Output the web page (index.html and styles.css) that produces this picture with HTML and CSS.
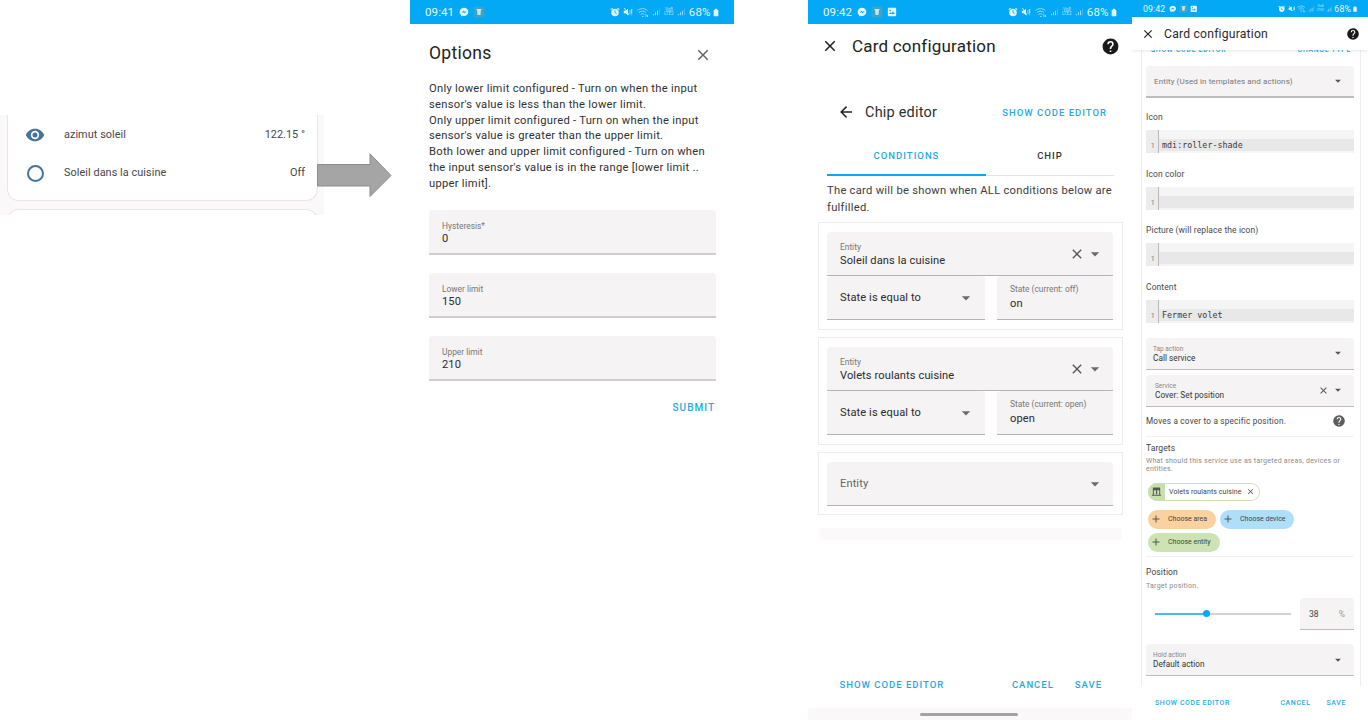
FILE: index.html
```html
<!DOCTYPE html>
<html lang="en">
<head>
<meta charset="utf-8">
<title>Card configuration</title>
<link rel="stylesheet" href="styles.css">
</head>
<body>
<svg class="sprite" width="0" height="0" aria-hidden="true">
  <symbol id="i-close" viewBox="0 0 24 24"><path d="M19,6.41L17.59,5L12,10.59L6.41,5L5,6.41L10.59,12L5,17.59L6.41,19L12,13.41L17.59,19L19,17.59L13.41,12L19,6.41Z"/></symbol>
  <symbol id="i-back" viewBox="0 0 24 24"><path d="M20,11V13H8L13.5,18.5L12.08,19.92L4.16,12L12.08,4.08L13.5,5.5L8,11H20Z"/></symbol>
  <symbol id="i-help" viewBox="0 0 24 24"><path d="M15.07,11.25L14.17,12.17C13.45,12.89 13,13.5 13,15H11V14.5C11,13.39 11.45,12.39 12.17,11.67L13.41,10.41C13.78,10.05 14,9.55 14,9C14,7.89 13.1,7 12,7A2,2 0 0,0 10,9H8A4,4 0 0,1 12,5A4,4 0 0,1 16,9C16,9.88 15.64,10.67 15.07,11.25M13,19H11V17H13M12,2A10,10 0 0,0 2,12A10,10 0 0,0 12,22A10,10 0 0,0 22,12C22,6.47 17.5,2 12,2Z"/></symbol>
  <symbol id="i-eye" viewBox="0 0 24 24"><path d="M12,9A3,3 0 0,0 9,12A3,3 0 0,0 12,15A3,3 0 0,0 15,12A3,3 0 0,0 12,9M12,17A5,5 0 0,1 7,12A5,5 0 0,1 12,7A5,5 0 0,1 17,12A5,5 0 0,1 12,17M12,4.5C7,4.5 2.73,7.61 1,12C2.73,16.39 7,19.5 12,19.5C17,19.5 21.27,16.39 23,12C21.27,7.61 17,4.5 12,4.5Z"/></symbol>
  <symbol id="i-down" viewBox="0 0 24 24"><path d="M7,10L12,15L17,10H7Z"/></symbol>
  <symbol id="i-plus" viewBox="0 0 24 24"><path d="M19,13H13V19H11V13H5V11H11V5H13V11H19V13Z"/></symbol>
  <symbol id="i-shade" viewBox="0 0 24 24"><path d="M20 19V3H4V19H2V21H22V19H20M6 19V9H11V14.8C10.6 15.1 10.3 15.5 10.3 16C10.3 17 11.1 17.8 12.1 17.8S13.9 17 13.9 16C13.9 15.5 13.7 15 13.3 14.8V9H18V19H6Z"/></symbol>
  <symbol id="s-msg" viewBox="0 0 24 24"><path fill-rule="evenodd" d="M12 2C6 2 1.5 6.300 1.500 11.800c0 3 1.300 5.500 3.500 7.300V23l3.500-2c1.100.3 2.300.5 3.500.5 6 0 10.500-4.300 10.500-9.700S18 2 12 2zM6 15l4.500-6 3 2.500L18 9l-4.500 6-3-2.500z"/></symbol>
  <symbol id="s-app" viewBox="0 0 24 24"><rect x="1" y="1" width="22" height="22" rx="3" fill="#3aa5c9"/><path d="M8 7h8l-1 11H9z" fill="#bfe6f2"/><rect x="7" y="6" width="10" height="1.500" fill="#e4f5fa"/></symbol>
  <symbol id="s-pic" viewBox="0 0 24 24"><path fill-rule="evenodd" d="M4 2h16a2 2 0 0 1 2 2v16a2 2 0 0 1-2 2H4a2 2 0 0 1-2-2V4a2 2 0 0 1 2-2zm1 15h14l-4.500-6-3.500 4.500-2.500-3zM7.500 6a2 2 0 1 0 0 4 2 2 0 0 0 0-4z"/></symbol>
  <symbol id="s-alarm" viewBox="0 0 24 24"><path fill-rule="evenodd" d="M12 4a9 9 0 1 0 0 18 9 9 0 0 0 0-18zm-1 4h2v5l3.500 2-1 1.600L11 14zM1 5.500 5.500 2l1.500 1.800L2.500 7.300zM23 5.500 18.500 2 17 3.800l4.500 3.500z"/></symbol>
  <symbol id="s-mute" viewBox="0 0 24 24"><path d="M2 9v6h4l6 5V4L6 9zM2.500 3 14 20l1.500-1L4 2zM16 7l1.500-1v12L16 17zM20 5h2v11h-2zM20 18h2v2h-2z"/></symbol>
  <symbol id="s-wifi" viewBox="0 0 24 24"><path fill="none" stroke="currentColor" stroke-width="2" d="M1 9c6-5 14-5 20 0M4 13c4-3.500 10-3.500 14 0M7 17c2.500-2 5.500-2 8 0"/><path d="M10 20h3v2h-3zM17 16h2v6h-2zM20 18h2v4h-2z"/></symbol>
  <symbol id="s-bars" viewBox="0 0 24 24"><path d="M3 18h3v4H3zM9 13h3v9H9zM15 8h3v14h-3z"/><path d="M21 2h2v20h-2z" opacity=".6"/></symbol>
  <symbol id="s-batt" viewBox="0 0 24 24"><path d="M9 1h6v3h3a1 1 0 0 1 1 1v17a1 1 0 0 1-1 1H6a1 1 0 0 1-1-1V5a1 1 0 0 1 1-1h3z"/></symbol>
</svg>

<main class="canvas">

  <section class="panel panel-entities">
    <div class="entity-card">
      <div class="entity-row">
        <svg class="entity-icon"><use href="#i-eye"/></svg>
        <span class="entity-name">azimut soleil</span>
        <span class="entity-value">122.15 °</span>
      </div>
      <div class="entity-row">
        <span class="entity-ring"></span>
        <span class="entity-name">Soleil dans la cuisine</span>
        <span class="entity-value">Off</span>
      </div>
    </div>
    <div class="entity-next"></div>
  </section>

  <svg class="big-arrow" viewBox="0 0 75 45"><path d="M0.500 11.500H53V0.800L74 22.500L53 43.500V33H0.500Z"/></svg>

  <section class="panel panel-options">
    <div class="status">
      <span class="status-time">09:41</span>
      <svg class="si"><use href="#s-msg"/></svg>
      <svg class="si si-app"><use href="#s-app"/></svg>
      <span class="status-right">
        <svg class="si"><use href="#s-alarm"/></svg>
        <svg class="si"><use href="#s-mute"/></svg>
        <svg class="si si-wifi"><use href="#s-wifi"/></svg>
        <svg class="si si-bars"><use href="#s-bars"/></svg>
        <span class="si-lte">Vo8<br>LTE2</span>
        <svg class="si si-bars"><use href="#s-bars"/></svg>
        <span class="status-pct">68%</span>
        <svg class="si si-batt"><use href="#s-batt"/></svg>
      </span>
    </div>
    <div class="opt-head">
      <h2 class="opt-title">Options</h2>
      <svg class="ic ic-opt-close"><use href="#i-close"/></svg>
    </div>
    <p class="opt-text">Only lower limit configured - Turn on when the input<br>sensor's value is less than the lower limit.<br>Only upper limit configured - Turn on when the input<br>sensor's value is greater than the upper limit.<br>Both lower and upper limit configured - Turn on when<br>the input sensor's value is in the range [lower limit ..<br>upper limit].</p>
    <div class="opt-fields">
      <div class="field field-opt"><span class="f-label">Hysteresis*</span><span class="f-value">0</span></div>
      <div class="field field-opt"><span class="f-label">Lower limit</span><span class="f-value">150</span></div>
      <div class="field field-opt"><span class="f-label">Upper limit</span><span class="f-value">210</span></div>
    </div>
    <div class="opt-actions"><span class="btn">SUBMIT</span></div>
  </section>

  <section class="panel panel-chip">
    <div class="status">
      <span class="status-time">09:42</span>
      <svg class="si"><use href="#s-msg"/></svg>
      <svg class="si si-app"><use href="#s-app"/></svg>
      <svg class="si"><use href="#s-pic"/></svg>
      <span class="status-right">
        <svg class="si"><use href="#s-alarm"/></svg>
        <svg class="si"><use href="#s-mute"/></svg>
        <svg class="si si-wifi"><use href="#s-wifi"/></svg>
        <svg class="si si-bars"><use href="#s-bars"/></svg>
        <span class="si-lte">Vo8<br>LTE2</span>
        <svg class="si si-bars"><use href="#s-bars"/></svg>
        <span class="status-pct">68%</span>
        <svg class="si si-batt"><use href="#s-batt"/></svg>
      </span>
    </div>
    <header class="dlg-head">
      <svg class="ic ic-x"><use href="#i-close"/></svg>
      <h2 class="dlg-title">Card configuration</h2>
      <svg class="ic ic-help"><use href="#i-help"/></svg>
    </header>
    <div class="chip-head">
      <svg class="ic ic-back"><use href="#i-back"/></svg>
      <span class="chip-title">Chip editor</span>
      <span class="btn btn-chip">SHOW CODE EDITOR</span>
    </div>
    <div class="tabs">
      <span class="tab tab-on">CONDITIONS</span>
      <span class="tab">CHIP</span>
    </div>
    <p class="chip-desc">The card will be shown when ALL conditions below are fulfilled.</p>

    <div class="cond">
      <div class="field field-entity">
        <div class="f-stack"><span class="f-label">Entity</span><span class="f-value">Soleil dans la cuisine</span></div>
        <svg class="ic ic-clear"><use href="#i-close"/></svg>
        <svg class="ic ic-caret"><use href="#i-down"/></svg>
      </div>
      <div class="cond-row">
        <div class="field field-select"><span class="f-value">State is equal to</span><svg class="ic ic-caret"><use href="#i-down"/></svg></div>
        <div class="field field-state"><span class="f-label">State (current: off)</span><span class="f-value">on</span></div>
      </div>
    </div>
    <div class="cond">
      <div class="field field-entity">
        <div class="f-stack"><span class="f-label">Entity</span><span class="f-value">Volets roulants cuisine</span></div>
        <svg class="ic ic-clear"><use href="#i-close"/></svg>
        <svg class="ic ic-caret"><use href="#i-down"/></svg>
      </div>
      <div class="cond-row">
        <div class="field field-select"><span class="f-value">State is equal to</span><svg class="ic ic-caret"><use href="#i-down"/></svg></div>
        <div class="field field-state"><span class="f-label">State (current: open)</span><span class="f-value">open</span></div>
      </div>
    </div>
    <div class="cond cond-empty">
      <div class="field field-entity">
        <span class="f-placeholder">Entity</span>
        <svg class="ic ic-caret"><use href="#i-down"/></svg>
      </div>
    </div>
    <div class="chip-strip"></div>
    <div class="chip-foot">
      <span class="btn btn-foot-left">SHOW CODE EDITOR</span>
      <span class="btn">CANCEL</span>
      <span class="btn btn-save">SAVE</span>
    </div>
    <div class="nav-bar"><span class="nav-handle"></span></div>
  </section>

  <section class="panel panel-config">
    <div class="status status-small">
      <span class="status-time">09:42</span>
      <svg class="si"><use href="#s-msg"/></svg>
      <svg class="si si-app"><use href="#s-app"/></svg>
      <svg class="si"><use href="#s-pic"/></svg>
      <span class="status-right">
        <svg class="si"><use href="#s-alarm"/></svg>
        <svg class="si"><use href="#s-mute"/></svg>
        <svg class="si si-wifi"><use href="#s-wifi"/></svg>
        <svg class="si si-bars"><use href="#s-bars"/></svg>
        <span class="si-lte">Vo8<br>LTE2</span>
        <svg class="si si-bars"><use href="#s-bars"/></svg>
        <span class="status-pct">68%</span>
        <svg class="si si-batt"><use href="#s-batt"/></svg>
      </span>
    </div>
    <header class="cfg-head">
      <svg class="ic ic-cfg-x"><use href="#i-close"/></svg>
      <h2 class="cfg-title">Card configuration</h2>
      <svg class="ic ic-cfg-help"><use href="#i-help"/></svg>
    </header>
    <div class="cfg-body">
      <div class="cfg-clipped"><span>SHOW CODE EDITOR</span><span>CHANGE TYPE</span></div>
      <div class="field cfg-select cfg-entity"><span class="cfg-ph">Entity (Used in templates and actions)</span><svg class="ic ic-sm"><use href="#i-down"/></svg></div>

      <div class="cfg-label cfg-label-first">Icon</div>
      <div class="code"><span class="code-gutter">1</span><span class="code-main"><span class="code-line">mdi:roller-shade</span></span></div>
      <div class="cfg-label">Icon color</div>
      <div class="code"><span class="code-gutter">1</span><span class="code-main"><span class="code-line"></span></span></div>
      <div class="cfg-label">Picture (will replace the icon)</div>
      <div class="code"><span class="code-gutter">1</span><span class="code-main"><span class="code-line"></span></span></div>
      <div class="cfg-label">Content</div>
      <div class="code"><span class="code-gutter">1</span><span class="code-main"><span class="code-line">Fermer volet</span></span></div>

      <div class="field cfg-select cfg-tap"><div class="f-stack"><span class="cfg-mini">Tap action</span><span class="cfg-val">Call service</span></div><svg class="ic ic-sm"><use href="#i-down"/></svg></div>
      <div class="field cfg-select cfg-service"><div class="f-stack"><span class="cfg-mini">Service</span><span class="cfg-val">Cover: Set position</span></div><svg class="ic ic-sm-x"><use href="#i-close"/></svg><svg class="ic ic-sm"><use href="#i-down"/></svg></div>

      <div class="cfg-desc"><span>Moves a cover to a specific position.</span><svg class="ic ic-cfg-q"><use href="#i-help"/></svg></div>
      <div class="cfg-targets">
        <div class="cfg-h">Targets</div>
        <p class="cfg-sub">What should this service use as targeted areas, devices or entities.</p>
        <div class="tag-picked">
          <span class="tag-ico"><svg class="ic ic-shade"><use href="#i-shade"/></svg></span>
          <span class="tag-name">Volets roulants cuisine</span>
          <svg class="ic ic-tag-x"><use href="#i-close"/></svg>
        </div>
        <div class="tag-row">
          <span class="tag tag-area"><svg class="ic ic-plus"><use href="#i-plus"/></svg>Choose area</span>
          <span class="tag tag-device"><svg class="ic ic-plus"><use href="#i-plus"/></svg>Choose device</span>
          <span class="tag tag-entity"><svg class="ic ic-plus"><use href="#i-plus"/></svg>Choose entity</span>
        </div>
      </div>
      <div class="cfg-position">
        <div class="cfg-h">Position</div>
        <p class="cfg-sub">Target position.</p>
        <div class="slider-row">
          <div class="slider"><span class="slider-fill"></span><span class="slider-thumb"></span></div>
          <div class="num-box"><span>38</span><span class="num-unit">%</span></div>
        </div>
      </div>
      <div class="field cfg-select cfg-hold"><div class="f-stack"><span class="cfg-mini">Hold action</span><span class="cfg-val">Default action</span></div><svg class="ic ic-sm"><use href="#i-down"/></svg></div>
    </div>
    <div class="cfg-foot">
      <span class="btn-s btn-s-left">SHOW CODE EDITOR</span>
      <span class="btn-s">CANCEL</span>
      <span class="btn-s btn-s-save">SAVE</span>
    </div>
  </section>
</main>
</body>
</html>
```

FILE: styles.css
```css
* { box-sizing: border-box; }
html, body { margin: 0; height: 100%; background: #fff; }
body { font-family: Roboto, "Liberation Sans", sans-serif; color: #212121; overflow: hidden; }
.sprite { position: absolute; }
.canvas { position: relative; width: 1368px; height: 720px; overflow: hidden; }
.panel { position: absolute; background: #fff; overflow: hidden; }
svg { display: block; fill: currentColor; flex: none; }
p, h2 { margin: 0; font-weight: 400; }

/* Free-canvas placement of the pasted screenshots */
.panel-entities { left: 0; top: 115px; width: 324px; height: 100px; background: #faf8f8; }
.panel-options { left: 410px; top: 0; width: 324px; height: 720px; }
.panel-chip { left: 808px; top: 0; width: 324px; height: 720px; display: flex; flex-direction: column; }
.panel-config { left: 1132px; top: 0; width: 236px; height: 720px; display: flex; flex-direction: column; }
.big-arrow { position: absolute; left: 317px; top: 153px; width: 75px; height: 45px; fill: #a5a5a5; stroke: #8c8c8c; stroke-width: 1; }

/* Entities */
.entity-card { margin-left: 7px; width: 311px; height: 86px; background: #fff; border: 1px solid #e8e6e6; border-top: 0; border-radius: 0 0 12px 12px; padding-top: 1px; }
.entity-row { height: 38px; display: flex; align-items: center; padding: 0 12px 0 17px; font-size: 10.900px; color: #474747; }
.entity-icon { width: 20px; height: 20px; color: #44739e; }
.entity-ring { width: 17px; height: 17px; margin: 0 1.500px; border: 2px solid #44739e; border-radius: 50%; flex: none; }
.entity-name { margin-left: 19px; margin-bottom: 2px; flex: 1; letter-spacing: .05px; }
.entity-value { margin-bottom: 2px; }
.entity-next { margin: 8px 0 0 7px; width: 311px; height: 12px; background: #fff; border: 1px solid #e8e6e6; border-radius: 12px 12px 0 0; }

/* Status bars */
.status { height: 24px; flex: none; background: #03a9f4; color: #e3f5fd; display: flex; align-items: center; gap: 4px; padding: 0 14px 0 15px; font-size: 11.500px; }
.status-time { margin-right: 1px; letter-spacing: .1px; }
.status-right { margin-left: auto; display: flex; align-items: center; gap: 3.500px; }
.si { width: 10px; height: 10px; }
.si-app { width: 12px; height: 12px; }
.si-wifi { width: 12px; height: 12px; opacity: .65; }
.si-bars { width: 8px; height: 10px; opacity: .65; }
.si-lte { width: 10px; font-size: 4.500px; line-height: 4.500px; opacity: .75; text-align: center; }
.si-batt { width: 8px; height: 11px; margin-left: -2px; }
.status-pct { letter-spacing: .1px; }
.status-small { height: 17px; padding: 0 10px 0 11px; font-size: 8.800px; gap: 2.500px; }
.status-small .si { width: 7.500px; height: 7.500px; }
.status-small .si-app { width: 9px; height: 9px; }
.status-small .si-wifi { width: 9px; height: 9px; }
.status-small .si-bars { width: 6px; height: 8px; }
.status-small .si-batt { width: 6px; height: 8px; margin-left: -1px; }
.status-small .si-lte { width: 8px; font-size: 3.400px; line-height: 3.500px; }
.status-small .status-right { gap: 2px; }

/* Generic */
.ic { width: 24px; height: 24px; }
.ic-caret { width: 20px; height: 20px; color: #6b6b6b; margin-left: 2px; }
.btn { color: #1fa9e6; font-size: 10px; font-weight: 500; letter-spacing: 1px; }
.field { background: #f5f3f4; border-radius: 4px 4px 0 0; border-bottom: 1px solid #b4b4b4; display: flex; }
.f-label { font-size: 8.400px; color: #777; display: block; line-height: 11px; }
.f-value { font-size: 11.100px; color: #2b2b2b; display: block; letter-spacing: .1px; }
.f-stack { flex: 1; min-width: 0; }

/* Options dialog */
.opt-head { height: 54px; padding: 0 19px; display: flex; align-items: center; justify-content: space-between; margin-top: 2px; }
.opt-title { font-size: 17.500px; color: #232323; letter-spacing: .3px; }
.ic-opt-close { width: 18px; height: 18px; margin-right: 3px; margin-top: 3px; color: #666; }
.opt-text { margin: 0 19px; font-size: 11.200px; line-height: 15.800px; color: #303030; letter-spacing: .27px; padding-top: 1px; white-space: nowrap; }
.opt-fields { margin: 18px 18px 0 19px; display: flex; flex-direction: column; gap: 18px; }
.field-opt { height: 45px; flex-direction: column; padding: 11px 13px 0; border-bottom: 2px solid #cfcdcd; }
.field-opt .f-value { margin-top: 0; line-height: 14px; }
.opt-actions { margin: 21px 19px 0; display: flex; justify-content: flex-end; }

/* Chip editor */
.dlg-head { height: 44px; flex: none; display: flex; align-items: center; padding: 0 12px 0 13px; }
.ic-x { width: 18px; height: 18px; color: #1f1f1f; }
.dlg-title { margin-left: 13px; flex: 1; font-size: 17px; color: #222; letter-spacing: .2px; }
.ic-help { width: 19px; height: 19px; color: #1a1a1a; }
.chip-head { margin-top: 24px; height: 40px; flex: none; display: flex; align-items: center; padding: 0 25px 0 29px; }
.ic-back { width: 18px; height: 18px; color: #222; }
.chip-title { margin-left: 10px; flex: 1; font-size: 14.500px; color: #2e2e2e; letter-spacing: .2px; }
.btn-chip { font-size: 9.500px; letter-spacing: 1px; }
.tabs { margin: 4px 18px 0 19px; height: 40px; flex: none; display: flex; border-bottom: 1px solid #e3e3e3; }
.tab { flex: 1 1 50%; display: flex; align-items: center; justify-content: center; font-size: 9.500px; font-weight: 500; letter-spacing: 1px; color: #333; padding-bottom: 1px; }
.tab-on { color: #1fa9e6; flex: 0 0 159px; margin-bottom: -1px; border-bottom: 2px solid #03a9f4; padding-bottom: 0; }
.chip-desc { margin: 7px 19px 0; height: 39px; flex: none; font-size: 11.200px; line-height: 16.500px; color: #3c3c3c; letter-spacing: .27px; }
.cond { margin: 0 9px 7px 10px; flex: none; border: 1px solid #ececec; padding: 9px 9px 9px 8px; }
.field-entity { height: 44px; align-items: center; padding: 0 8px 0 13px; }
.field-entity .f-label { margin-top: 2px; }
.field-entity .f-value { line-height: 15px; }
.ic-clear { width: 16px; height: 16px; color: #555; margin-right: -2px; }
.cond-row { display: flex; gap: 12px; }
.field-select { width: 158px; height: 44px; align-items: center; justify-content: space-between; padding: 0 9px 0 13px; }
.field-state { flex: 1; height: 44px; flex-direction: column; padding: 8px 13px 0; }
.field-state .f-value { margin-top: 1px; line-height: 15px; }
.cond-empty { margin-bottom: 0; padding-bottom: 8px; }
.f-placeholder { flex: 1; font-size: 11.100px; color: #666; letter-spacing: .1px; }
.chip-strip { margin: 13px 10px 0 11px; height: 12px; flex: none; background: #fbf9f9; border-radius: 4px; }
.chip-foot { margin-top: auto; height: 54px; flex: none; display: flex; align-items: center; gap: 21px; padding: 6px 30px 0 31.500px; }
.chip-foot .btn { font-size: 9.500px; letter-spacing: 1px; }
.btn-foot-left { margin-right: auto; }
.nav-bar { height: 12px; flex: none; background: #faf8f8; display: flex; justify-content: center; padding-top: 5px; }
.nav-handle { width: 98px; height: 3px; background: #a3a3a3; border-radius: 2px; margin-left: -2px; }

/* Card configuration */
.cfg-head { height: 33px; flex: none; background: #fff; display: flex; align-items: center; padding: 0 8px 0 9px; box-shadow: 0 1px 3px rgba(0,0,0,.1); position: relative; z-index: 1; }
.ic-cfg-x { width: 14px; height: 14px; color: #222; }
.cfg-title { margin-left: 9px; flex: 1; font-size: 12.200px; color: #2b2b2b; letter-spacing: .2px; }
.ic-cfg-help { width: 14px; height: 14px; color: #1a1a1a; }
.cfg-body { height: 636px; flex: none; margin: 0 7px 0 9px; border: 1px solid #eee; border-width: 0 1px; padding: 0 6px 0 4px; }
.cfg-clipped { height: 4px; overflow: hidden; display: flex; justify-content: space-between; padding: 0 3px 0 5px; font-size: 6.700px; font-weight: 500; letter-spacing: .8px; color: #1fa9e6; line-height: 0; }
.cfg-clipped span { display: block; }
.cfg-select { height: 32px; align-items: center; padding: 0 9px 0 7px; border-bottom: 1px solid #bdbdbd; }
.cfg-entity { margin-top: 12px; border-bottom-width: 2px; padding-left: 8px; }
.cfg-ph { flex: 1; font-size: 8px; color: #777; letter-spacing: .1px; }
.ic-sm { width: 14px; height: 14px; color: #555; }
.ic-sm-x { width: 11px; height: 11px; color: #555; margin-right: 2px; }
.cfg-label { margin: 15.400px 0 8px; font-size: 8.500px; line-height: 10px; color: #4a4a4a; letter-spacing: .1px; }
.cfg-label-first { margin-top: 14.400px; }
.code { display: flex; height: 23px; background: #f6f5f5; }
.code-gutter { width: 13px; flex: none; background: #ececec; border-right: 1px solid #b9b9b9; font-size: 8px; color: #888; padding: 10px 3px 0 0; text-align: right; line-height: 11px; }
.code-main { flex: 1; padding-top: 9px; }
.code-line { display: block; height: 12px; background: #e8e8e8; font-family: "DejaVu Sans Mono", "Liberation Mono", monospace; font-size: 8.400px; line-height: 12px; color: #3a3a3a; padding-left: 3px; }
.cfg-tap { margin-top: 15px; }
.cfg-tap, .cfg-hold { padding-left: 7px; }
.cfg-service { margin-top: 5px; padding-left: 9px; }
.cfg-select .f-stack { margin-top: 2px; }
.cfg-mini { display: block; font-size: 6.500px; color: #888; line-height: 8px; }
.cfg-val { display: block; font-size: 8.200px; color: #333; line-height: 11px; letter-spacing: .05px; }
.cfg-desc { height: 30px; display: flex; align-items: center; justify-content: space-between; padding-right: 8px; font-size: 8.200px; color: #444; letter-spacing: .2px; border-bottom: 1px solid #f0f0f0; }
.ic-cfg-q { width: 14px; height: 14px; color: #5e5e5e; }
.cfg-targets { padding-top: 6px; height: 120px; border-bottom: 1px solid #f0f0f0; }
.cfg-h { font-size: 8.500px; line-height: 10px; color: #444; letter-spacing: .1px; }
.cfg-sub { margin-top: 4px; font-size: 7px; line-height: 8.500px; color: #8a8a8a; letter-spacing: .25px; }
.tag-picked { margin: 9px 0 0 2px; height: 18px; width: 112px; display: flex; align-items: center; border: 1px solid #cfe2b8; border-radius: 9px; font-size: 7px; color: #444; }
.tag-ico { width: 17px; height: 18px; margin-left: -1px; border-radius: 9px 0 0 9px; background: #c8e0ae; display: flex; align-items: center; justify-content: center; flex: none; }
.ic-shade { width: 11px; height: 11px; color: #555; }
.tag-name { margin-left: 4px; flex: 1; white-space: nowrap; letter-spacing: .08px; }
.ic-tag-x { width: 9px; height: 9px; color: #555; margin-right: 4px; }
.tag-row { margin: 9px 0 0 2px; display: flex; flex-wrap: wrap; gap: 4px; }
.tag { height: 19px; display: flex; align-items: center; border-radius: 10px; font-size: 7px; color: #444; padding-right: 8px; white-space: nowrap; }
.ic-plus { width: 12px; height: 12px; color: #555; margin: 0 6px 0 2px; }
.tag-area { background: #fbd29f; width: 68px; }
.tag-device { background: #aedffa; width: 74px; }
.tag-entity { background: #cde3b3; width: 72px; }
.cfg-position { padding-top: 10px; }
.cfg-position .cfg-sub { margin-top: 5px; }
.slider-row { margin-top: 8px; display: flex; align-items: center; }
.slider { position: relative; margin-left: 9px; width: 136px; height: 2px; background: #d2d2d2; }
.slider-fill { display: block; width: 52px; height: 2px; background: #4fb8ea; }
.slider-thumb { position: absolute; left: 48px; top: -3px; width: 7px; height: 7px; border-radius: 50%; background: #03a9f4; }
.num-box { margin-left: 9px; width: 54px; height: 32px; background: #f5f3f4; border-bottom: 1px solid #bdbdbd; border-radius: 4px 4px 0 0; display: flex; align-items: center; justify-content: space-between; padding: 0 9px; font-size: 8.500px; color: #444; }
.num-unit { color: #999; }
.cfg-hold { margin-top: 14px; }
.cfg-foot { flex: 1; display: flex; align-items: center; gap: 16px; padding: 0 22px 0 23px; }
.btn-s { color: #1fa9e6; font-size: 7px; font-weight: 500; letter-spacing: .6px; }
.btn-s-left { margin-right: auto; }
```
